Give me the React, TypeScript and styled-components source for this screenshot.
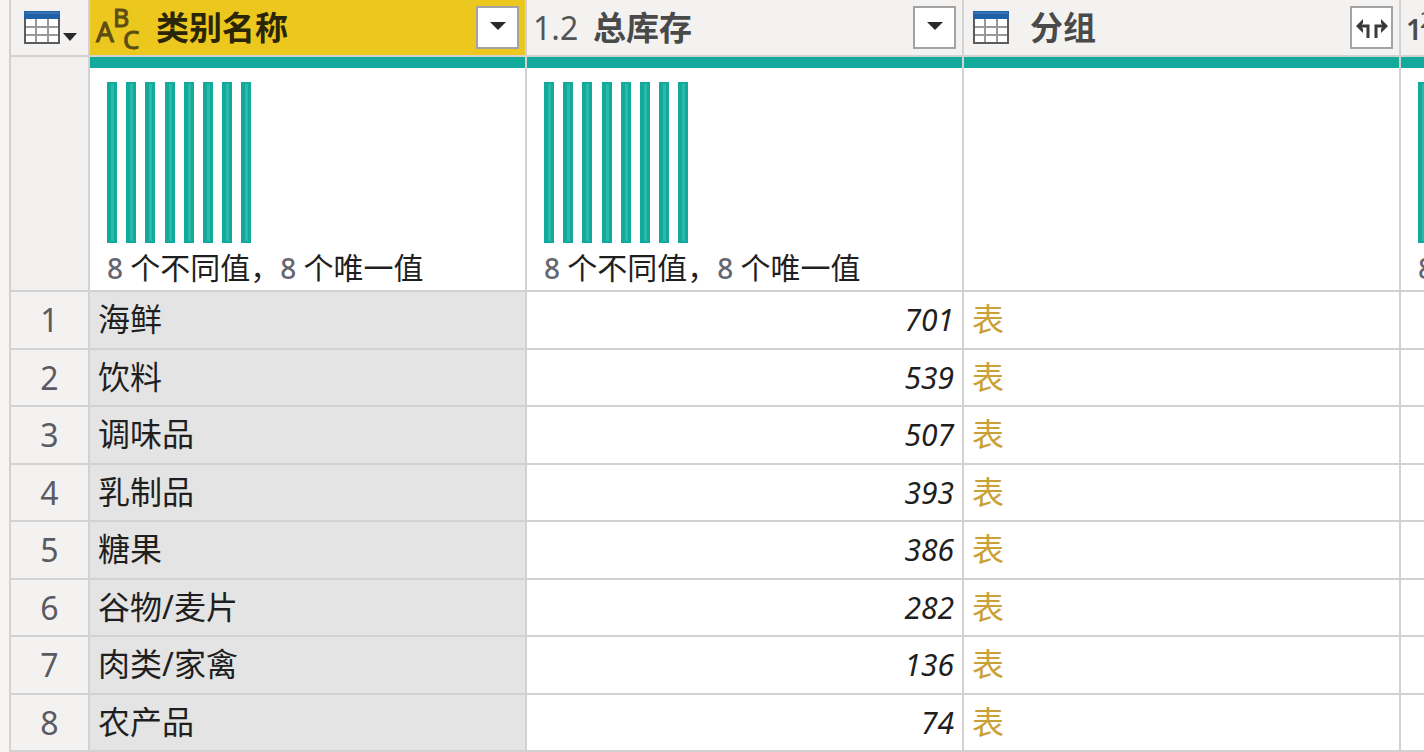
import React from "react";
import styled, { createGlobalStyle } from "styled-components";

const line = "#d2d2d2";
const chrome = "#f3f2f1";
const teal = "#12ab9b";

const GlobalStyle = createGlobalStyle`
  * { box-sizing: border-box; }
  body {
    margin: 0;
    background: #f6f5f4;
    color: #1f1f1f;
    font-family: "Noto Sans", "Noto Sans CJK SC", sans-serif;
    overflow-x: hidden;
  }
`;

const Preview = styled.main`
  padding-left: 9px;
  overflow: hidden;
`;

const Grid = styled.table`
  width: 100%;
  table-layout: fixed;
  border-collapse: separate;
  border-spacing: 0;
  border-left: 2px solid ${line};
  th:last-child, td:last-child { border-right: 0; }
`;

const Col = styled.col<{ $width?: number }>`
  width: ${(p) => (p.$width ? `${p.$width}px` : "auto")};
`;

const HeadCell = styled.th<{ $selected?: boolean }>`
  height: 57px;
  padding: 0;
  overflow: hidden;
  border-right: 2px solid ${line};
  border-bottom: 2px solid ${line};
  background: ${(p) => (p.$selected ? "#ecc81f" : chrome)};
  color: ${(p) => (p.$selected ? "#2b2508" : "#4a4a4a")};
  font-weight: 700;
  text-align: left;
`;

const HeadContent = styled.div`
  display: flex;
  align-items: center;
  height: 55px;
  padding: 0 6px;
`;

const TypeSlot = styled.span<{ $icon?: boolean }>`
  display: flex;
  flex: none;
  width: 60px;
  padding-left: ${(p) => (p.$icon ? 3 : 0)}px;
  color: #555555;
  font-size: 32px;
  font-weight: 400;
  line-height: 40px;
`;

const Title = styled.span`
  flex: 1;
  font-size: 33px;
  line-height: 40px;
  white-space: nowrap;
`;

const HeadButton = styled.button`
  display: flex;
  flex: none;
  align-items: center;
  justify-content: center;
  width: 43px;
  height: 43px;
  padding: 0;
  border: 2px solid #a3a3a3;
  background: #ffffff;
`;

const CornerButton = styled.button`
  display: flex;
  align-items: center;
  gap: 3px;
  width: 100%;
  height: 55px;
  padding: 0 0 0 13px;
  border: 0;
  background: transparent;
`;

const ProfileCorner = styled.td`
  border-right: 2px solid ${line};
  border-bottom: 2px solid ${line};
  background: #f1f0ef;
`;

const ProfileCell = styled.td`
  height: 235px;
  padding: 25px 0 0 17px;
  overflow: hidden;
  border-right: 2px solid ${line};
  border-bottom: 2px solid ${line};
  background: #ffffff;
  box-shadow: inset 0 11px ${teal};
  vertical-align: top;
`;

const Chart = styled.svg`
  display: block;
`;

const Summary = styled.p`
  margin: 5px 0 0;
  font-size: 30px;
  line-height: 40px;
  white-space: nowrap;
`;

const Count = styled.span`
  color: #666670;
  font-size: 28px;
  font-weight: 500;
`;

const Row = styled.tr`
  height: 57px;
  &:nth-child(odd) { height: 58px; }
`;

const RowNumber = styled.th`
  padding: 0;
  border-right: 2px solid ${line};
  border-bottom: 2px solid ${line};
  background: ${chrome};
  color: #5a5a62;
  font-size: 32px;
  font-weight: 400;
  line-height: 40px;
  text-align: center;
`;

const Cell = styled.td<{ $selected?: boolean }>`
  padding: 0 8px 2px;
  border-right: 2px solid ${line};
  border-bottom: 2px solid ${line};
  background: ${(p) => (p.$selected ? "#e4e4e4" : "#ffffff")};
  font-size: 32px;
  line-height: 40px;
  white-space: nowrap;
`;

const NumberCell = styled(Cell)`
  padding-bottom: 0;
  font-size: 30px;
  font-style: italic;
  text-align: right;
`;

const TableLink = styled.a`
  color: #c9a136;
  text-decoration: none;
`;

const TypeIcon = styled.svg`
  overflow: visible;
`;

const TableIcon = () => (
  <svg width="36" height="33" viewBox="0 0 36 33" aria-hidden="true">
    <rect x="1" y="1" width="34" height="31" fill="#ffffff" />
    <path d="M12 7V31M24 7V31M1 16H35M1 24H35" stroke="#999999" strokeWidth="2" fill="none" />
    <path d="M1 7V32H35V7" stroke="#5c5c5c" strokeWidth="2" fill="none" />
    <rect x="0" y="0" width="36" height="8" fill="#215fa6" />
    <path d="M1 2H35" stroke="#4b86c6" strokeWidth="1" />
  </svg>
);

const Caret = () => (
  <svg width="16" height="13" viewBox="0 0 16 13" aria-hidden="true">
    <path d="M0 1H16L8 9Z" fill="#2a2a2a" />
  </svg>
);

const CornerCaret = () => (
  <svg width="14" height="33" viewBox="0 0 14 33" aria-hidden="true">
    <path d="M0 22H14L7 30Z" fill="#2a2a2a" />
  </svg>
);

const TextTypeIcon = () => (
  <TypeIcon width="44" height="44" viewBox="0 0 44 44" fill="#5d4d12" stroke="#5d4d12" strokeWidth="1" aria-hidden="true">
    <text x="0" y="36" fontSize="28">A</text>
    <text x="17" y="21" fontSize="25">B</text>
    <text x="27" y="43" fontSize="26">C</text>
  </TypeIcon>
);

const IntegerTypeIcon = () => (
  <TypeIcon width="40" height="44" viewBox="0 0 40 44" fill="#4c4c4c" aria-hidden="true">
    <text x="-1" y="34" fontSize="28" fontWeight="600">1</text>
    <text x="13" y="22" fontSize="22">2</text>
    <text x="24" y="42" fontSize="22">3</text>
  </TypeIcon>
);

const ExpandIcon = () => (
  <svg width="32" height="20" viewBox="0 0 32 20" fill="none" stroke="#3a3a3a" strokeWidth="3" aria-hidden="true">
    <path d="M12 20V8H5M20 20V8H27" />
    <path d="M0 8L7 1V5L5 8L7 11V15ZM32 8L25 1V5L27 8L25 11V15Z" fill="#3a3a3a" stroke="none" />
  </svg>
);

const Distribution = () => (
  <Chart width="145" height="161" viewBox="0 0 145 161" role="img" aria-label="列分布">
    {Array.from({ length: 8 }, (_, i) => (
      <g key={i} transform={`translate(${Math.round(i * 19.2)} 0)`}>
        <rect width="10" height="161" fill={teal} />
        <rect x="4" y="2" width="3" height="157" fill="#2ab9aa" />
      </g>
    ))}
  </Chart>
);

const Profile = () => (
  <ProfileCell>
    <Distribution />
    <Summary>
      <Count>8 </Count>个不同值，<Count>8 </Count>个唯一值
    </Summary>
  </ProfileCell>
);

const rows = [
  { name: "海鲜", stock: 701 },
  { name: "饮料", stock: 539 },
  { name: "调味品", stock: 507 },
  { name: "乳制品", stock: 393 },
  { name: "糖果", stock: 386 },
  { name: "谷物/麦片", stock: 282 },
  { name: "肉类/家禽", stock: 136 },
  { name: "农产品", stock: 74 },
];

export default function App() {
  return (
    <>
      <GlobalStyle />
      <Preview>
        <Grid>
          <colgroup>
            <Col $width={79} />
            <Col $width={437} />
            <Col $width={437} />
            <Col $width={437} />
            <Col />
          </colgroup>
          <thead>
            <tr>
              <HeadCell>
                <CornerButton aria-label="表选项">
                  <TableIcon />
                  <CornerCaret />
                </CornerButton>
              </HeadCell>
              <HeadCell $selected scope="col">
                <HeadContent>
                  <TypeSlot><TextTypeIcon /></TypeSlot>
                  <Title>类别名称</Title>
                  <HeadButton aria-label="筛选类别名称"><Caret /></HeadButton>
                </HeadContent>
              </HeadCell>
              <HeadCell scope="col">
                <HeadContent>
                  <TypeSlot>1.2</TypeSlot>
                  <Title>总库存</Title>
                  <HeadButton aria-label="筛选总库存"><Caret /></HeadButton>
                </HeadContent>
              </HeadCell>
              <HeadCell scope="col">
                <HeadContent>
                  <TypeSlot $icon><TableIcon /></TypeSlot>
                  <Title>分组</Title>
                  <HeadButton aria-label="展开分组"><ExpandIcon /></HeadButton>
                </HeadContent>
              </HeadCell>
              <HeadCell scope="col">
                <HeadContent>
                  <TypeSlot><IntegerTypeIcon /></TypeSlot>
                </HeadContent>
              </HeadCell>
            </tr>
            <tr>
              <ProfileCorner />
              <Profile />
              <Profile />
              <ProfileCell />
              <Profile />
            </tr>
          </thead>
          <tbody>
            {rows.map((row, i) => (
              <Row key={row.name}>
                <RowNumber scope="row">{i + 1}</RowNumber>
                <Cell $selected>{row.name}</Cell>
                <NumberCell>{row.stock}</NumberCell>
                <Cell><TableLink href="#">表</TableLink></Cell>
                <Cell />
              </Row>
            ))}
          </tbody>
        </Grid>
      </Preview>
    </>
  );
}
